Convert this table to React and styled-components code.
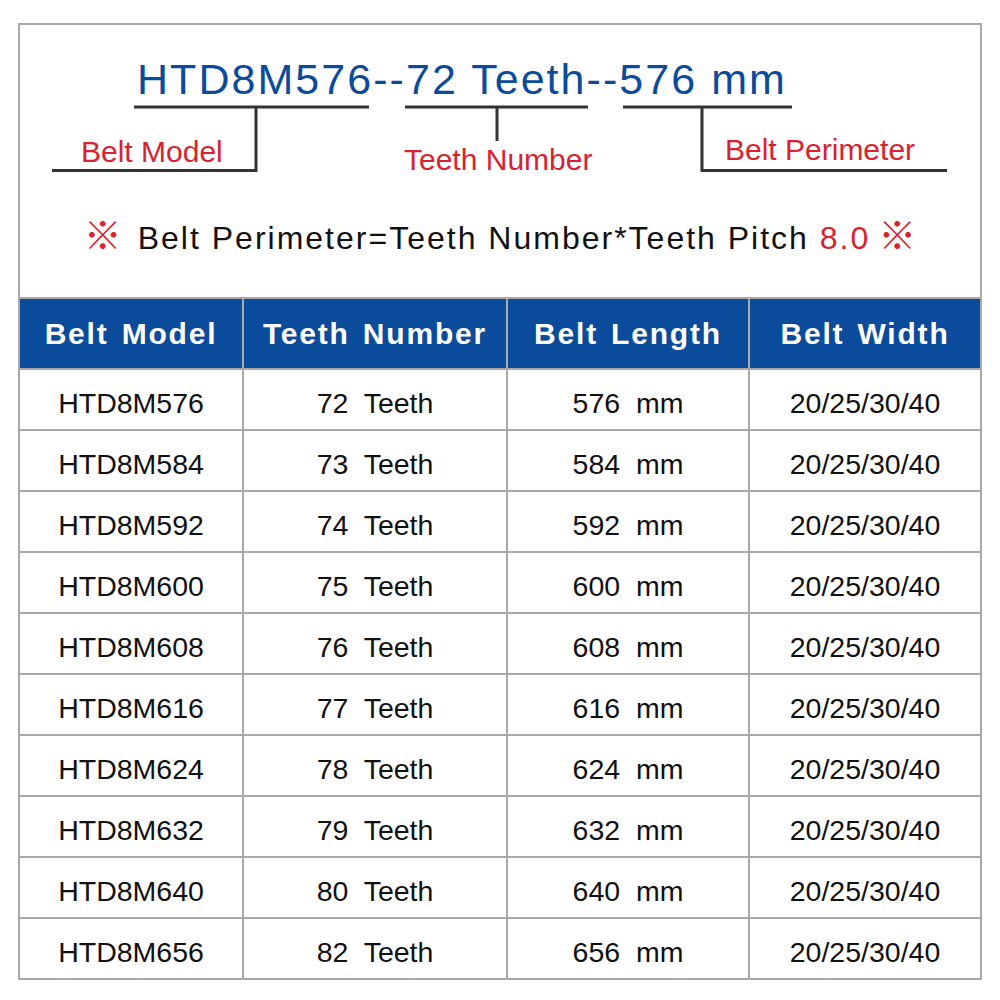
import React from 'react';
import styled, { createGlobalStyle } from 'styled-components';

const GlobalStyle = createGlobalStyle`
  html, body {
    margin: 0;
    padding: 0;
    background: #ffffff;
  }
  body {
    font-family: "Liberation Sans", Arial, sans-serif;
  }
`;

const BLUE = '#0a4b9b';
const RED = '#d8222f';
const GRID = '#a9a9a9';

const Frame = styled.div`
  box-sizing: border-box;
  width: 964px;
  margin: 23px 0 0 18px;
  border: 2px solid ${GRID};
  background: #fff;
`;

const TopPanel = styled.section`
  height: 272px;
  display: flex;
  flex-direction: column;
`;

const Diagram = styled.div`
  position: relative;
  height: 197px;
`;

const Brackets = styled.svg`
  position: absolute;
  left: 0;
  top: 0;
`;

const ModelTitle = styled.div`
  position: absolute;
  left: 117px;
  top: 33px;
  font-size: 43px;
  line-height: 1;
  letter-spacing: 2.05px;
  color: ${BLUE};
  white-space: nowrap;
`;

const Callout = styled.div`
  position: absolute;
  left: ${(p) => p.$x}px;
  top: ${(p) => p.$y}px;
  font-size: 30px;
  line-height: 1;
  color: ${RED};
  white-space: nowrap;
`;

const Formula = styled.div`
  text-align: center;
  font-size: 32px;
  line-height: 32px;
  color: #111;
  white-space: nowrap;
`;

const Mark = styled.span`
  font-family: "Noto Sans CJK SC", "DejaVu Sans", sans-serif;
  font-size: 38px;
  line-height: 0;
  color: ${RED};
  margin: ${(p) => (p.$end ? '0 0 0 8px' : '0 16px 0 0')};
`;

const FormulaText = styled.span`
  letter-spacing: 2px;
`;

const Accent = styled.span`
  color: ${RED};
`;

const SpecTable = styled.div`
  display: grid;
  grid-template-columns: 222px 262px 240px 230px;
  grid-template-rows: 69px repeat(10, 59px);
  gap: 2px;
  padding-top: 2px;
  background: ${GRID};
`;

const HeadCell = styled.div`
  display: flex;
  align-items: center;
  justify-content: center;
  background: ${BLUE};
  color: #fff;
  font-weight: bold;
  font-size: 30px;
  letter-spacing: 1.8px;
  word-spacing: 3px;
  white-space: nowrap;
`;

const BodyCell = styled.div`
  box-sizing: border-box;
  display: flex;
  align-items: center;
  justify-content: center;
  padding-top: 7px;
  background: #fff;
  color: #111;
  font-size: 28.5px;
  white-space: pre;
`;

const headers = ['Belt Model', 'Teeth Number', 'Belt Length', 'Belt Width'];
const teethCounts = [72, 73, 74, 75, 76, 77, 78, 79, 80, 82];

const App = () => {
  const rows = teethCounts.map((teeth) => {
    const length = teeth * 8;
    return {
      model: `HTD8M${length}`,
      teeth: `${teeth}  Teeth`,
      length: `${length}  mm`,
      width: '20/25/30/40',
    };
  });

  return (
    <>
      <GlobalStyle />
      <Frame>
        <TopPanel>
          <Diagram>
            <Brackets width="960" height="197" viewBox="0 0 960 197">
              <g fill="none" stroke="#333" strokeWidth="3">
                <path d="M114 82 H349" />
                <path d="M32 145.5 H236 V82" />
                <path d="M385 82 H568" />
                <path d="M477 82 V116" />
                <path d="M603 82 H772" />
                <path d="M682 82 V145.5 H927" />
              </g>
            </Brackets>
            <ModelTitle>HTD8M576--72 Teeth--576 mm</ModelTitle>
            <Callout $x={61} $y={112}>Belt Model</Callout>
            <Callout $x={384} $y={120}>Teeth Number</Callout>
            <Callout $x={705} $y={110}>Belt Perimeter</Callout>
          </Diagram>
          <Formula>
            <Mark>※</Mark>
            <FormulaText>
              Belt Perimeter=Teeth Number*Teeth Pitch <Accent>8.0</Accent>
            </FormulaText>
            <Mark $end>※</Mark>
          </Formula>
        </TopPanel>

        <SpecTable>
          {headers.map((h) => (
            <HeadCell key={h}>{h}</HeadCell>
          ))}
          {rows.map((r) => (
            <React.Fragment key={r.model}>
              <BodyCell>{r.model}</BodyCell>
              <BodyCell>{r.teeth}</BodyCell>
              <BodyCell>{r.length}</BodyCell>
              <BodyCell>{r.width}</BodyCell>
            </React.Fragment>
          ))}
        </SpecTable>
      </Frame>
    </>
  );
};

export default App;
